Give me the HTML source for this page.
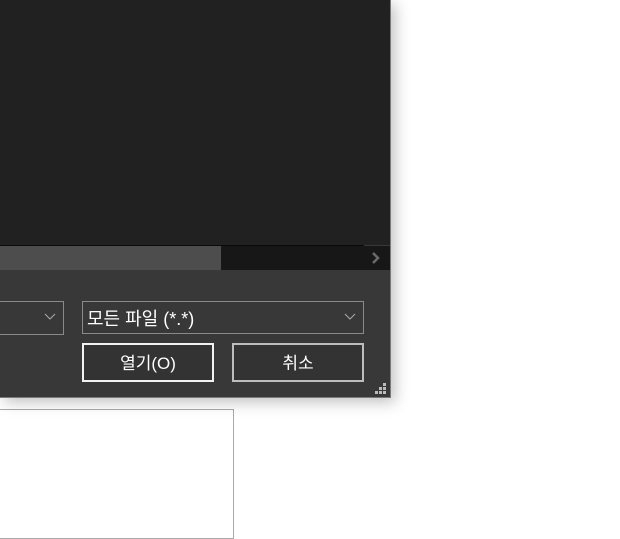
<!DOCTYPE html>
<html><head><meta charset="utf-8"><style>
body{margin:0;width:620px;height:525px;background:#fff;position:relative;overflow:hidden;font-family:"Liberation Sans","Noto Sans CJK KR",sans-serif}
div{position:absolute;box-sizing:border-box}
.t{color:#fff;font-size:17px;line-height:20px}
</style></head><body>
<div style="left:0;top:409px;width:234px;height:130px;border:1px solid #aaa;border-left:none"></div>
<div style="left:0;top:0;width:391px;height:398px;background:#383838;border-right:1px solid #7a7a7a;border-bottom:1px solid #7a7a7a;box-shadow:4px 4px 14px rgba(0,0,0,0.25)"></div>
<div style="left:0;top:0;width:390px;height:245px;background:#212121"></div>
<div style="left:0;top:245px;width:364px;height:1px;background:#0a0a0a"></div>
<div style="left:0;top:246px;width:390px;height:24px;background:#171717"></div>
<div style="left:0;top:246px;width:221px;height:24px;background:#4d4d4d"></div>
<svg style="position:absolute;left:370px;top:252px" width="12" height="12"><path d="M3 1 L8 6 L3 11" stroke="#6a6a6a" stroke-width="2.5" fill="none"/></svg>
<div style="left:-2px;top:301px;width:66px;height:34px;border:1px solid #8a8a8a"></div>
<svg style="position:absolute;left:44px;top:313px" width="12" height="8"><path d="M1 1 L6 6 L11 1" stroke="#aaa" stroke-width="1" fill="none"/></svg>
<div style="left:82px;top:301px;width:282px;height:33px;border:1px solid #8a8a8a"></div>
<div class="t" style="left:87px;top:309px;font-size:18px">모든 파일 (*.*)</div>
<svg style="position:absolute;left:344px;top:313px" width="12" height="8"><path d="M1 1 L6 6 L11 1" stroke="#aaa" stroke-width="1" fill="none"/></svg>
<div style="left:82px;top:343px;width:132px;height:39px;border:2px solid #f2f2f2;background:#333"></div>
<div class="t" style="left:82px;top:354px;width:132px;text-align:center">열기(O)</div>
<div style="left:232px;top:343px;width:132px;height:39px;border:2px solid #bdbdbd;background:#333"></div>
<div class="t" style="left:232px;top:354px;width:132px;text-align:center">취소</div>
<svg style="position:absolute;left:375px;top:383px" width="12" height="12" fill="#bbb"><rect x="8" y="0" width="3" height="3"/><rect x="4" y="4" width="3" height="3"/><rect x="8" y="4" width="3" height="3"/><rect x="0" y="8" width="3" height="3"/><rect x="4" y="8" width="3" height="3"/><rect x="8" y="8" width="3" height="3"/></svg>
</body></html>
